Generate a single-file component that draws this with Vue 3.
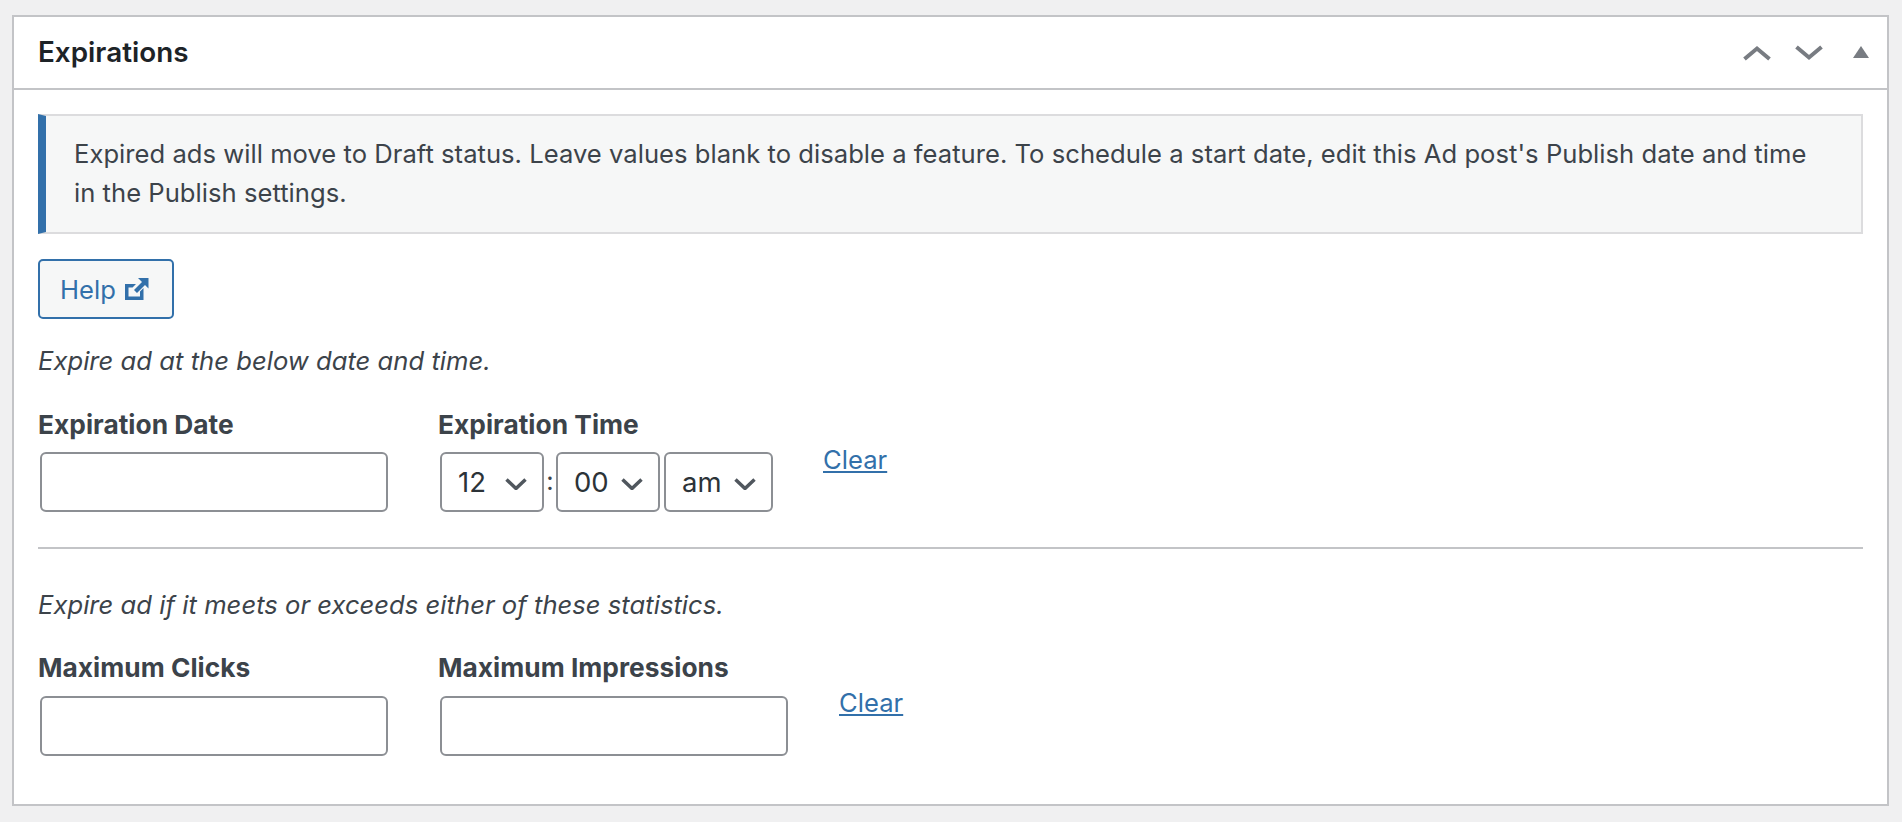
<script setup>
const hours = ['12']
const minutes = ['00']
const periods = ['am', 'pm']
</script>

<template>
  <div class="page">
    <section class="box">
      <header class="head">
        <h2>Expirations</h2>
        <div class="controls">
          <svg class="chev first" width="28" height="16" viewBox="0 0 28 16"><path d="M1.500 14 14 3.500 26.500 14" /></svg>
          <svg class="chev second" width="28" height="16" viewBox="0 0 28 16"><path d="M1.500 2 14 12.500 26.500 2" /></svg>
          <svg class="tri" width="16" height="12" viewBox="0 0 16 12"><path d="M8 0 16 12H0Z" /></svg>
        </div>
      </header>
      <div class="inside">
        <div class="notice">
          <p>Expired ads will move to Draft status. Leave values blank to disable a feature. To schedule a start date, edit this Ad post's Publish date and time in the Publish settings.</p>
        </div>
        <a class="help" href="#" @click.prevent>
          <span>Help</span>
          <svg width="24" height="22" viewBox="0 0 24 22"><path d="M0 6h11L7.500 9.500H3.500v9h11.500v-5l3.500-3.500V22H0ZM13 0h10.500v10.500L20 7l-8 8-3-3 8-8Z" /></svg>
        </a>
        <p class="desc first-desc">Expire ad at the below date and time.</p>
        <div class="fields">
          <div class="field col-a">
            <label for="date">Expiration Date</label>
            <input id="date" type="text" />
          </div>
          <div class="field col-b">
            <label>Expiration Time</label>
            <div class="time">
              <select class="sel-h"><option v-for="h in hours" :key="h">{{ h }}</option></select>
              <span class="colon">:</span>
              <select class="sel-m"><option v-for="m in minutes" :key="m">{{ m }}</option></select>
              <select class="sel-p"><option v-for="p in periods" :key="p">{{ p }}</option></select>
            </div>
          </div>
          <a class="clear clear-a" href="#" @click.prevent>Clear</a>
        </div>
        <hr />
        <p class="desc">Expire ad if it meets or exceeds either of these statistics.</p>
        <div class="fields second-row">
          <div class="field col-a">
            <label for="clicks">Maximum Clicks</label>
            <input id="clicks" type="text" />
          </div>
          <div class="field col-b">
            <label for="impr">Maximum Impressions</label>
            <input id="impr" type="text" />
          </div>
          <a class="clear clear-b" href="#" @click.prevent>Clear</a>
        </div>
      </div>
    </section>
  </div>
</template>

<style>
html, body { margin: 0; background: #f0f0f1; }
</style>

<style scoped>
.page {
  padding: 15px 13px 0 12px;
  font-family: Inter, "Liberation Sans", sans-serif;
  color: #3c434a;
  font-size: 25.6px;
  letter-spacing: 0.025px;
  line-height: 39px;
}
.box {
  box-sizing: border-box;
  height: 791px;
  border: 2px solid #c3c4c7;
  background: #fff;
}
.head {
  box-sizing: border-box;
  height: 73px;
  border-bottom: 2px solid #c3c4c7;
  display: flex;
  align-items: center;
  justify-content: space-between;
  padding: 0 18px 0 24px;
}
h2 {
  margin: 0;
  font-size: 27.800px;
  font-weight: 600;
  color: #1d2327;
}
.controls { display: flex; align-items: center; }
.chev path { fill: none; stroke: #787c82; stroke-width: 4; }
.chev.second { margin-left: 24px; }
.tri { margin-left: 30px; margin-top: -2px; }
.tri path { fill: #787c82; }
.inside { padding: 24px 24px 0 24px; }
.notice {
  box-sizing: border-box;
  height: 120px;
  background: #f6f7f7;
  border: 2px solid #dcdcde;
  border-left: 8px solid #3270aa;
  padding: 18px 50px 18px 28px;
}
.notice p { margin: 0; }
.help {
  box-sizing: border-box;
  display: inline-flex;
  align-items: center;
  gap: 9px;
  margin-top: 25px;
  width: 136px;
  height: 60px;
  padding-left: 20px;
  background: #f6f7f7;
  border: 2px solid #3270aa;
  border-radius: 5px;
  color: #3270aa;
  text-decoration: none;
}
.help svg { fill: #3270aa; }
.desc { margin: 0; font-style: italic; }
.first-desc { margin-top: 22px; }
.fields { display: flex; margin-top: 25px; }
.second-row { margin-top: 24px; }
.second-row input { margin-top: 9px; }
.field { display: flex; flex-direction: column; }
.col-a { width: 400px; }
label { font-weight: 700; font-size: 26.300px; }
input, select {
  box-sizing: border-box;
  height: 60px;
  background-color: #fff;
  border: 2px solid #8c8f94;
  border-radius: 6px;
  font: inherit;
  color: #2c3338;
  outline: none;
}
input { width: 348px; margin: 8px 0 0 2px; padding: 0 16px; }
.time { display: flex; align-items: center; margin: 8px 0 0 2px; }
select {
  appearance: none;
  -webkit-appearance: none;
  padding: 0 0 0 16px;
  font-size: 27.500px;
  background-image: url("data:image/svg+xml,%3Csvg xmlns='http://www.w3.org/2000/svg' width='22' height='12' viewBox='0 0 22 12'%3E%3Cpath d='M1.500 1.500 11 10.500 20.500 1.500' fill='none' stroke='%2350575e' stroke-width='3.500'/%3E%3C/svg%3E");
  background-repeat: no-repeat;
  background-position: right 15px top 24px;
  background-size: 22px 12px;
}
.sel-h, .sel-m { width: 104px; }
.sel-p { width: 109px; margin-left: 4px; }
.colon { width: 12px; text-align: center; position: relative; top: -2px; }
.clear { color: #3270aa; text-decoration: underline; align-self: flex-start; margin-top: 35px; }
.clear-a { margin-left: 50px; }
.clear-b { margin-left: 51px; }
hr { border: 0; border-top: 2px solid #c3c4c7; margin: 35px 0 0; }
hr + .desc { margin-top: 36px; }
</style>
